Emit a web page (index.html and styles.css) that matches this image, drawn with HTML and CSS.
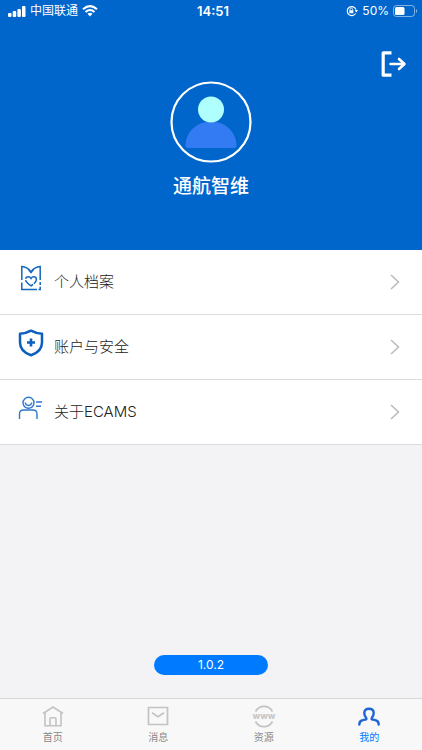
FILE: index.html
```html
<!DOCTYPE html>
<html lang="zh-CN">
<head>
<meta charset="utf-8">
<meta name="viewport" content="width=device-width, initial-scale=1">
<title>我的</title>
<link rel="stylesheet" href="styles.css">
</head>
<body>
<div class="app">
  <header class="hero">
    <div class="status">
      <div class="status-side">
        <svg width="18" height="11" viewBox="0 0 18 11" fill="#fff" aria-hidden="true"><rect x="0" y="7" width="3.500" height="4" rx="1"/><rect x="4.700" y="5" width="3.500" height="6" rx="1"/><rect x="9.400" y="3" width="3.500" height="8" rx="1"/><rect x="14" y="0" width="3.500" height="11" rx="1"/></svg>
        <span class="carrier">中国联通</span>
        <svg width="16" height="12" viewBox="0 0 16 12" fill="none" stroke="#fff" stroke-width="2.100" aria-hidden="true"><path d="M1 4.300Q8-2 15 4.300M3.500 7Q8 3 12.500 7"/><path d="M5.500 8.800Q8 6.800 10.500 8.800L8 11.500Z" fill="#fff" stroke="none"/></svg>
      </div>
      <time class="clock">14:51</time>
      <div class="status-side status-right">
        <svg width="12" height="12" viewBox="0 0 12 12" fill="none" stroke="#fff" stroke-width="1.200" aria-hidden="true"><path d="M9.600 8.500A4.500 4.500 0 1 1 10 4.500"/><path d="M8.600 5H12L10.400 7.500Z" fill="#fff" stroke="none"/><rect x="3.300" y="5.200" width="4" height="3" fill="#fff" stroke="none"/><path d="M4 5.500V4.400a1.300 1.300 0 0 1 2.600 0V5.500" stroke-width=".8"/></svg>
        <span class="percent">50%</span>
        <svg width="25" height="12" viewBox="0 0 25 12" aria-hidden="true"><rect x=".5" y=".5" width="21" height="11" rx="3" fill="none" stroke="#fff" stroke-opacity=".5"/><rect x="2" y="2" width="9.500" height="8" rx="1.500" fill="#fff"/><path d="M23 4q2 2 0 4z" fill="#fff" fill-opacity=".6"/></svg>
      </div>
    </div>
    <button class="logout" type="button" aria-label="退出">
      <svg width="26" height="26" viewBox="0 0 26 26" fill="none" stroke="#fff" stroke-width="3" stroke-linecap="round" stroke-linejoin="round" aria-hidden="true"><path d="M11.500 1.800H3.200V24.200H11.500" stroke-linecap="butt" stroke-width="3.200"/><path d="M10.500 13H24M19 8l5.500 5L19 18" stroke-width="2.600"/></svg>
    </button>
    <svg class="avatar" width="82" height="82" viewBox="0 0 82 82" aria-hidden="true"><circle cx="41" cy="41" r="39.500" fill="none" stroke="#fff" stroke-width="2.200"/><path d="M15.500 65C15.500 51 27 40.500 41 40.500S66.500 51 66.500 65Q66.500 67 64.500 67H17.500Q15.500 67 15.500 65Z" fill="#337bf2"/><circle cx="41" cy="28.500" r="13" fill="#afffff"/></svg>
    <h1 class="name">通航智维</h1>
  </header>

  <main class="content">
    <nav class="menu">
      <a class="row" href="#profile">
        <svg class="row-icon" width="26" height="28" viewBox="0 0 26 28" fill="none" stroke="#1467bd" stroke-width="1.500" aria-hidden="true"><path d="M3.800 16V2.600Q9.500 3 13 8Q16.500 3 22.200 2.600V16M10.500 5.500 13 8.500l2.500-3M3.800 18.500V25.500H19M22.200 18v3M22.200 22.800v2.700H20.500"/><path d="M13 21.800C9.800 19.600 7.600 18 7.600 15.500C7.600 12.200 11.500 11.800 13 14.500C14.500 11.800 18.400 12.200 18.400 15.500C18.400 18 16.200 19.600 13 21.800Z" stroke-dasharray="8 1 20 1"/></svg>
        <span class="row-label">个人档案</span>
        <svg class="chevron" width="10" height="16" viewBox="0 0 10 16" aria-hidden="true"><path d="M1 1l7.500 7L1 15"/></svg>
      </a>
      <a class="row" href="#security">
        <svg class="row-icon" width="26" height="28" viewBox="0 0 26 28" fill="none" stroke="#0b5fbd" stroke-width="2.500" stroke-linejoin="round" aria-hidden="true"><path d="M13 1.700Q18.500 4.700 24 4.800V13.500Q24 22.500 13 26.300Q2 22.500 2 13.500V4.800Q7.500 4.700 13 1.700Z"/><path d="M13 9.500v8M9 13.500h8" stroke-width="2.600"/></svg>
        <span class="row-label">账户与安全</span>
        <svg class="chevron" width="10" height="16" viewBox="0 0 10 16" aria-hidden="true"><path d="M1 1l7.500 7L1 15"/></svg>
      </a>
      <a class="row" href="#about">
        <svg class="row-icon" width="26" height="28" viewBox="0 0 26 28" fill="none" stroke="#2e78cc" stroke-width="1.400" aria-hidden="true"><circle cx="10.500" cy="8.800" r="5.500"/><path d="M7.200 8.500q.5 3 3.300 3t3.300-3M18 8h6M18 12.300h5M1.500 25v-5q0-4 4-4h9.500q4 0 4 4v5"/></svg>
        <span class="row-label">关于ECAMS</span>
        <svg class="chevron" width="10" height="16" viewBox="0 0 10 16" aria-hidden="true"><path d="M1 1l7.500 7L1 15"/></svg>
      </a>
    </nav>
    <span class="version">1.0.2</span>
  </main>

  <nav class="tabs">
    <a class="tab" href="#home">
      <svg width="22" height="22" viewBox="0 0 22 22" fill="none" stroke="#c3c3c3" stroke-width="1.600" aria-hidden="true"><path d="M1 8.500 11 2l10 6.500M3 7.500V20.700H19V7.500M8 20.500V14q0-1.200 1.200-1.200h3.600Q14 12.800 14 14v6.500"/></svg>
      <span>首页</span>
    </a>
    <a class="tab" href="#messages">
      <svg width="22" height="22" viewBox="0 0 22 22" fill="none" stroke="#c3c3c3" stroke-width="1.700" aria-hidden="true"><path d="M1.500 2.500h19v17h-19zM5 7.800l6 4 6-4"/></svg>
      <span>消息</span>
    </a>
    <a class="tab" href="#resources">
      <svg width="22" height="22" viewBox="0 0 22 22" fill="none" stroke="#c3c3c3" stroke-width="1.700" aria-hidden="true"><path d="M2.500 6.500a9.600 9.600 0 0 1 17 0M2.500 16.500a9.600 9.600 0 0 0 17 0"/><text class="www" x="11" y="14" text-anchor="middle">www</text></svg>
      <span>资源</span>
    </a>
    <a class="tab tab-active" href="#me" aria-current="page">
      <svg width="22" height="22" viewBox="0 0 22 22" fill="none" stroke="#2065d5" stroke-width="2.400" stroke-linecap="round" stroke-linejoin="round" aria-hidden="true"><path d="M1.300 19.500Q1.300 15.800 4.500 15.200L8.300 14.300V13Q6.300 11 6.300 8Q6.300 3.700 11 3.700T15.700 8Q15.700 11 13.700 13v1.300l3.800.9Q20.700 15.800 20.700 19.500"/></svg>
      <span>我的</span>
    </a>
  </nav>
</div>
</body>
</html>
```
FILE: styles.css
```css
* {
  box-sizing: border-box;
}

body {
  margin: 0;
  font-family: Inter, "Noto Sans CJK SC", sans-serif;
  background: #f3f3f5;
  color: #222;
}

a {
  color: inherit;
  text-decoration: none;
}

svg {
  display: block;
  flex: none;
  overflow: visible;
}

.app {
  display: flex;
  flex-direction: column;
  min-height: 100vh;
}

.hero {
  display: flex;
  flex-direction: column;
  align-items: center;
  padding-bottom: 49px;
  background: #0066cc;
  color: #fff;
}

.status {
  display: flex;
  align-items: center;
  align-self: stretch;
  height: 22px;
  padding: 0 4px 0 8px;
  font-size: 12px;
  line-height: 20px;
}

.status-side {
  display: flex;
  flex: 1;
  align-items: center;
  gap: 4px;
}

.status-right {
  justify-content: flex-end;
}

.clock {
  font-size: 13px;
  font-weight: 600;
}

.logout {
  align-self: flex-end;
  margin: 29px 16px 0 0;
  padding: 0;
  border: 0;
  background: none;
}

.avatar {
  margin-top: 4px;
}

.name {
  margin: 10px 0 0;
  font-size: 19px;
  font-weight: 500;
  line-height: 28px;
}

.content {
  display: flex;
  flex: 1;
  flex-direction: column;
  align-items: center;
}

.menu {
  align-self: stretch;
  background: #fff;
}

.row {
  display: flex;
  align-items: center;
  height: 65px;
  padding: 0 22px 0 18px;
  border-bottom: 1px solid #dcdcde;
}

.row-icon {
  margin: 0 10px 8px 0;
}

.row-label {
  flex: 1;
  font-size: 15px;
  font-weight: 300;
  line-height: 24px;
}

.chevron {
  fill: none;
  stroke: #bababa;
  stroke-width: 1.5px;
}

.version {
  width: 27%;
  margin: auto 0 23px;
  border-radius: 10px;
  background: #007aff;
  color: #fff;
  font-size: 12px;
  line-height: 20px;
  text-align: center;
}

.tabs {
  display: grid;
  grid-template-columns: repeat(4, 1fr);
  height: 52px;
  border-top: 1px solid #d7d7da;
  background: #f8f8f8;
}

.tab {
  display: flex;
  flex-direction: column;
  align-items: center;
  gap: 2px;
  padding-top: 6px;
  color: #888;
  font-size: 10px;
  line-height: 16px;
}

.tab-active {
  color: #007aff;
}

.www {
  fill: #c3c3c3;
  stroke: none;
  font-size: 9px;
  font-weight: 700;
}
```
